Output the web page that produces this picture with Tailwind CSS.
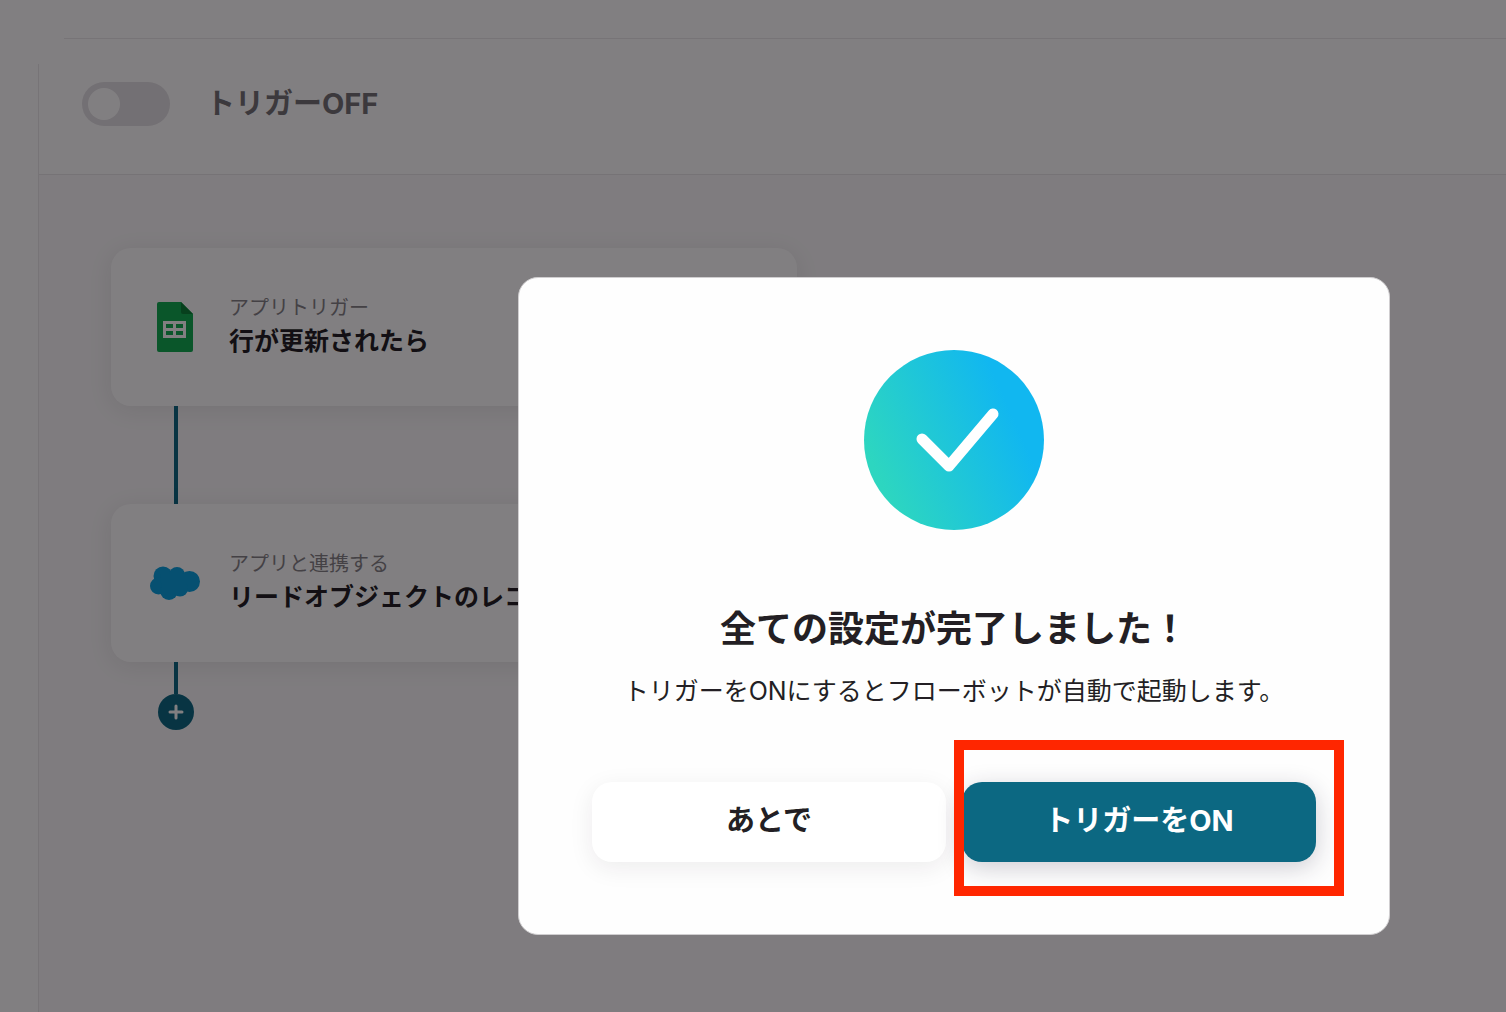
<!DOCTYPE html>
<html lang="ja">
<head>
  <meta charset="UTF-8">
  <meta name="viewport" content="width=device-width, initial-scale=1.0">
  <title>フローボット</title>
  <script src="https://cdn.jsdelivr.net/npm/@tailwindcss/browser@4"></script>
</head>
<body class="bg-white font-['Inter','Noto_Sans_CJK_JP',sans-serif] text-[#231f24]">
  <div class="flex min-h-screen flex-col pt-[38px]">
    <div class="ml-16 h-[26px] border-t border-[#eae8ea]"></div>
    <main class="ml-[38px] flex flex-1 flex-col border-l border-[#eae8ea]">
      <!-- Trigger switch -->
      <header class="flex h-[111px] items-start border-b border-[#e8e6e8] pt-4 pl-[43px]">
        <label for="trigger" class="flex items-center gap-9 text-[29px] leading-[48px] font-bold text-[#757376]">
          <input type="checkbox" id="trigger" class="h-11 w-[88px] appearance-none rounded-full bg-[#e3e1e4] p-[6px] before:block before:size-8 before:rounded-full before:bg-white">
          <span>トリガーOFF</span>
        </label>
      </header>

      <!-- Flow -->
      <section class="flex-1 bg-[#faf9fa] pt-[73px] pl-[72px]">
        <article class="flex h-[158px] max-w-[686px] items-center gap-[29px] rounded-[20px] bg-white pl-[39px] shadow-[0_4px_24px_rgba(35,31,36,0.09)]">
          <svg class="h-[50px] w-[50px]" viewBox="0 0 50 50">
            <path d="M9 0h22l12 12v36a2 2 0 0 1-2 2H9a2 2 0 0 1-2-2V2a2 2 0 0 1 2-2z" fill="#10ac50" />
            <path d="M31 0l12 12H33a2 2 0 0 1-2-2z" fill="#0a8037" />
            <path d="M13 19h23v17H13z" fill="#fff" />
            <path d="M16 22h7v4h-7zM26 22h7v4h-7zM16 29h7v4h-7zM26 29h7v4h-7z" fill="#10ac50" />
          </svg>
          <div>
            <p class="text-[20px] leading-[28px] text-[#858386]">アプリトリガー</p>
            <h2 class="text-[25px] leading-[38px] font-bold">行が更新されたら</h2>
          </div>
        </article>
        <div class="ml-[63px] h-[98px] w-1 bg-[#0c6882]"></div>
        <article class="flex h-[158px] max-w-[686px] items-center gap-[29px] rounded-[20px] bg-white pl-[39px] shadow-[0_4px_24px_rgba(35,31,36,0.09)]">
          <svg class="h-[50px] w-[50px]" viewBox="0 0 50 50" fill="#08a0de">
            <circle cx="13" cy="18" r="9.5" />
            <circle cx="27" cy="17" r="8" />
            <circle cx="39.5" cy="23.5" r="10.5" />
            <circle cx="8.5" cy="28" r="8.5" />
            <circle cx="19" cy="33" r="9" />
            <circle cx="30" cy="30.5" r="8" />
            <path d="M10 16h26v18H12z" />
          </svg>
          <div>
            <p class="text-[20px] leading-[28px] text-[#858386]">アプリと連携する</p>
            <h2 class="text-[25px] leading-[38px] font-bold">リードオブジェクトのレコ</h2>
          </div>
        </article>
        <div class="ml-[63px] h-8 w-1 bg-[#0c6882]"></div>
        <button type="button" aria-label="追加" class="ml-[47px] flex size-9 items-center justify-center rounded-full bg-[#0c6882]">
          <svg class="size-4" viewBox="0 0 16 16" stroke="#fff" stroke-width="3" stroke-linecap="round">
            <path d="M8 2v12M2 8h12" />
          </svg>
        </button>
      </section>
    </main>
  </div>

  <!-- Completion dialog -->
  <div class="fixed inset-0 flex items-center justify-center bg-[#040004]/50 pt-[200px] pl-[402px]">
    <div role="dialog" aria-modal="true" aria-labelledby="done" class="w-full max-w-[872px] rounded-[20px] border border-[#d0ced0] bg-[#fefefe] px-[73px] py-[72px] text-center">
      <svg class="mx-auto size-[180px]" viewBox="0 0 180 180" fill="none">
        <defs>
          <linearGradient id="grad" x1="20" y1="140" x2="155" y2="80" gradientUnits="userSpaceOnUse">
            <stop stop-color="#2dd6c0" />
            <stop offset="1" stop-color="#11b7f0" />
          </linearGradient>
        </defs>
        <circle cx="90" cy="90" r="90" fill="url(#grad)" />
        <path d="M58 89l27 27 44-52" stroke="#fff" stroke-width="11" stroke-linecap="round" stroke-linejoin="round" />
      </svg>
      <h1 id="done" class="mt-[72px] text-[36px] leading-[54px] font-bold">全ての設定が完了しました！</h1>
      <p class="mt-4 text-[25px] leading-[38px]">トリガーをONにするとフローボットが自動で起動します。</p>
      <div class="mt-[72px] grid grid-cols-2 gap-4">
        <button type="button" class="h-20 rounded-[20px] bg-white pb-[2px] text-[29px] font-bold shadow-[0_6px_24px_rgba(35,31,36,0.08)]">あとで</button>
        <div class="relative">
          <button type="button" class="h-20 w-full rounded-[20px] bg-[#0c6882] pb-[2px] text-[29px] font-bold text-white shadow-[0_6px_24px_rgba(35,31,60,0.22)]">トリガーをON</button>
          <div class="pointer-events-none absolute -top-[42px] -right-7 -bottom-[34px] -left-2 border-10 border-[#ff2600]"></div>
        </div>
      </div>
    </div>
  </div>
</body>
</html>
